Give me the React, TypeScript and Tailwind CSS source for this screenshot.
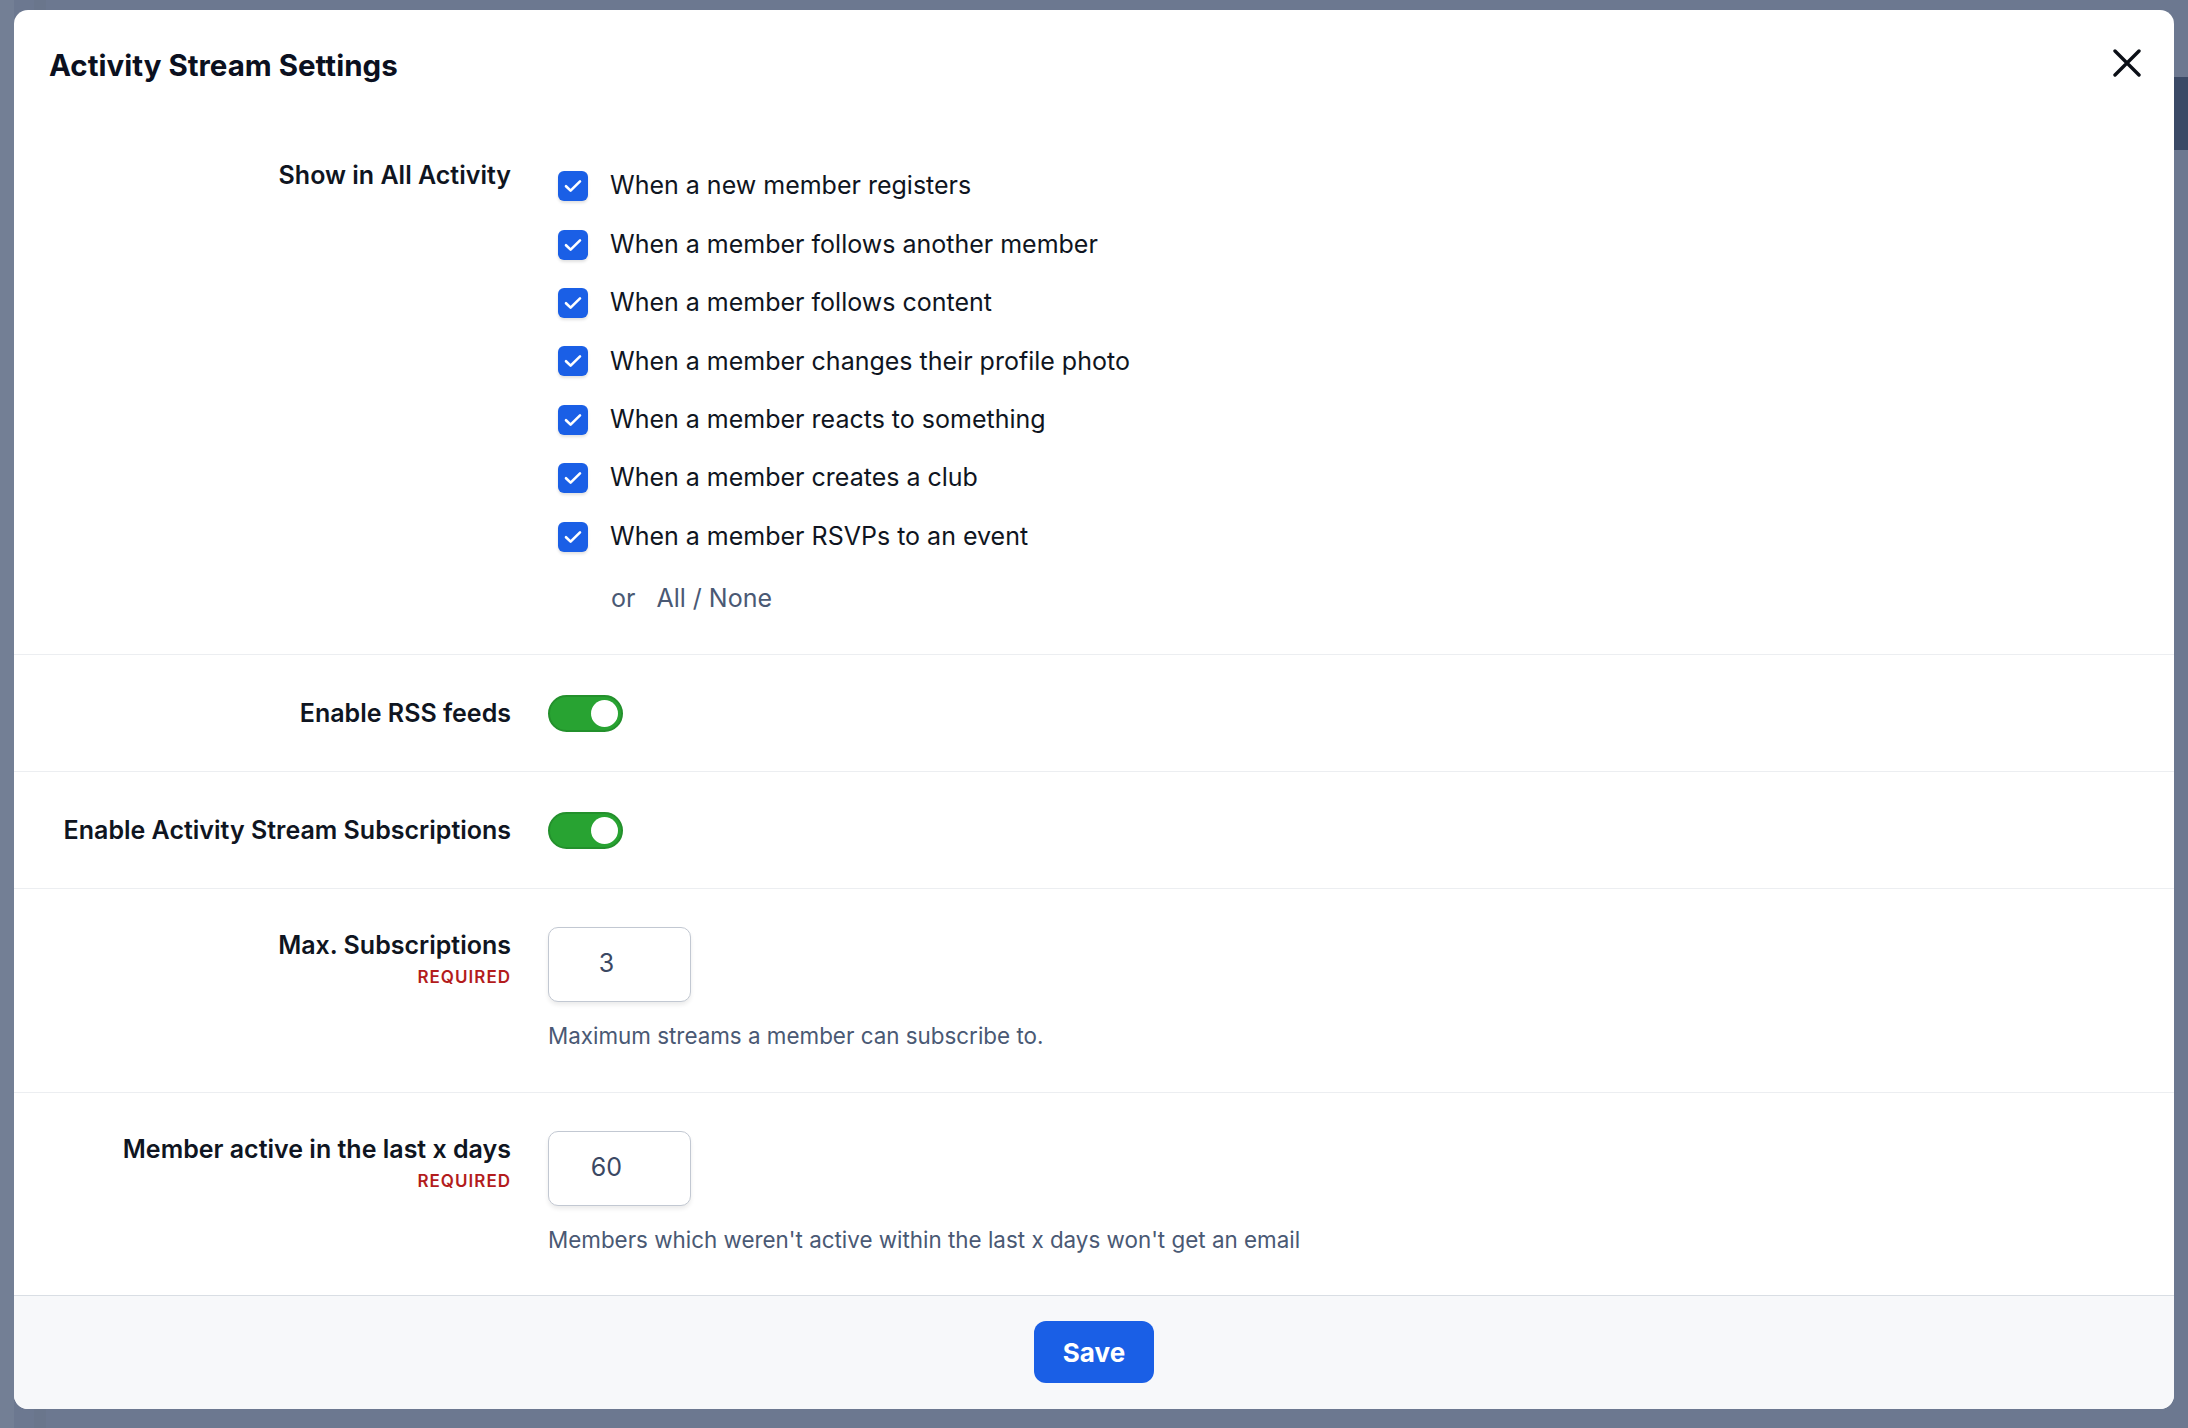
import React, { useState } from 'react';

const events = [
  'When a new member registers',
  'When a member follows another member',
  'When a member follows content',
  'When a member changes their profile photo',
  'When a member reacts to something',
  'When a member creates a club',
  'When a member RSVPs to an event'
];

const font = { fontFamily: 'Inter, "Noto Sans", sans-serif' };

const Checkbox: React.FC<{ checked: boolean; onClick: () => void }> = ({ checked, onClick }) => (
  <button
    onClick={onClick}
    className={`w-[30px] h-[30px] rounded-[6px] flex items-center justify-center shadow-[0_2px_3px_rgba(0,0,0,0.12)] ${
      checked ? 'bg-[#1a5fe6]' : 'bg-white border-2 border-[#c3c9d3]'
    }`}
  >
    {checked && (
      <svg width="18" height="14" viewBox="0 0 18 14" fill="none">
        <path d="M2 7.2L6.6 11.6L16 2.4" stroke="white" strokeWidth="2.6" strokeLinecap="round" strokeLinejoin="round" />
      </svg>
    )}
  </button>
);

const Toggle: React.FC<{ on: boolean; onClick: () => void }> = ({ on, onClick }) => (
  <button
    onClick={onClick}
    className={`w-[75px] h-[37px] rounded-full border-2 flex items-center px-[3px] ${
      on ? 'bg-[#28a332] border-[#23902c] justify-end' : 'bg-[#d1d5db] border-[#c3c8d0] justify-start'
    }`}
  >
    <span className="w-[27px] h-[27px] rounded-full bg-white block" />
  </button>
);

const Label: React.FC<{ text: string; required?: boolean }> = ({ text, required }) => (
  <div className="flex flex-col items-end">
    <div className="text-[25px] leading-[36px] font-semibold text-[#0f1521]">{text}</div>
    {required && (
      <div className="mt-[2px] text-[17px] leading-[24px] font-semibold tracking-[0.06em] text-[#b31c1c]">REQUIRED</div>
    )}
  </div>
);

const NumberField: React.FC<{ value: string; help: string }> = ({ value, help }) => (
  <div className="flex flex-col">
    <div className="w-[143px] h-[75px] rounded-[10px] border border-[#c2c8d2] bg-white shadow-[0_3px_4px_rgba(0,0,0,0.08)] flex items-center pl-[2px] pr-[28px]">
      <span className="flex-1 text-center text-[25px] text-[#3b4863]">{value}</span>
    </div>
    <div className="mt-[18px] text-[22.4px] leading-[32px] text-[#4a5974]">{help}</div>
  </div>
);

export default function App() {
  const [checked, setChecked] = useState<boolean[]>(events.map(() => true));
  const [rss, setRss] = useState(true);
  const [subs, setSubs] = useState(true);

  const toggleAt = (i: number) => setChecked(checked.map((c, j) => (j === i ? !c : c)));

  return (
    <div className="relative w-[2188px] h-[1428px] overflow-hidden bg-[#6c7890]" style={font}>
      {/* Seite hinter dem Overlay */}
      <div className="absolute right-0 top-[77px] w-[60px] h-[73px] bg-[#3b4a66]" />
      <div className="absolute left-0 top-0 w-[14px] h-full bg-[#737f95]" />
      <div className="absolute left-[34px] top-0 w-[12px] h-full bg-[#6a768c]" />

      <div className="relative pt-[10px] pl-[14px]">
        <div className="w-[2160px] h-[1399px] bg-white rounded-[14px] flex flex-col overflow-hidden">
          {/* Kopf */}
          <div className="flex items-start justify-between pl-[35px] pr-[33px] pt-[37px]">
            <h2 className="text-[29.5px] leading-[36px] font-bold text-[#0b1020]">Activity Stream Settings</h2>
            <button className="mt-[2px]" aria-label="Close">
              <svg width="28" height="28" viewBox="0 0 28 28" fill="none">
                <path d="M2 2L26 26M26 2L2 26" stroke="#0b0f17" strokeWidth="3.4" strokeLinecap="round" />
              </svg>
            </button>
          </div>

          {/* Show in All Activity */}
          <div className="grid grid-cols-[497px_1fr] gap-x-[37px] pt-[74px] pb-[38px]">
            <Label text="Show in All Activity" />
            <div className="flex flex-col">
              {events.map((e, i) => (
                <div key={e} className="h-[58.4px] flex items-center pl-[10px] gap-[22px]">
                  <Checkbox checked={checked[i]} onClick={() => toggleAt(i)} />
                  <span className="text-[25px] text-[#0f1521]">{e}</span>
                </div>
              ))}
              <div className="mt-[14px] pl-[63px] text-[25px] leading-[36px] text-[#4a5974] flex gap-[21px]">
                <span>or</span>
                <button onClick={() => setChecked(checked.every(Boolean) ? events.map(() => false) : events.map(() => true))}>
                  All / None
                </button>
              </div>
            </div>
          </div>

          {/* RSS */}
          <div className="grid grid-cols-[497px_1fr] gap-x-[37px] items-center border-t border-[#eceef1] pt-[40px] pb-[39px]">
            <Label text="Enable RSS feeds" />
            <div><Toggle on={rss} onClick={() => setRss(!rss)} /></div>
          </div>

          {/* Abos */}
          <div className="grid grid-cols-[497px_1fr] gap-x-[37px] items-center border-t border-[#eceef1] pt-[40px] pb-[39px]">
            <Label text="Enable Activity Stream Subscriptions" />
            <div><Toggle on={subs} onClick={() => setSubs(!subs)} /></div>
          </div>

          <div className="grid grid-cols-[497px_1fr] gap-x-[37px] items-start border-t border-[#eceef1] pt-[38px] pb-[40px]">
            <Label text="Max. Subscriptions" required />
            <NumberField value="3" help="Maximum streams a member can subscribe to." />
          </div>

          <div className="grid grid-cols-[497px_1fr] gap-x-[37px] items-start border-t border-[#eceef1] pt-[38px] pb-[39px]">
            <Label text="Member active in the last x days" required />
            <NumberField value="60" help="Members which weren't active within the last x days won't get an email" />
          </div>

          {/* Fuß */}
          <div className="flex-1 border-t border-[#d9dee4] bg-[#f7f8fa] flex items-center justify-center">
            <button className="w-[120px] h-[62px] rounded-[12px] bg-[#1a5fe6] text-white text-[26px] font-bold">Save</button>
          </div>
        </div>
      </div>
    </div>
  );
}
